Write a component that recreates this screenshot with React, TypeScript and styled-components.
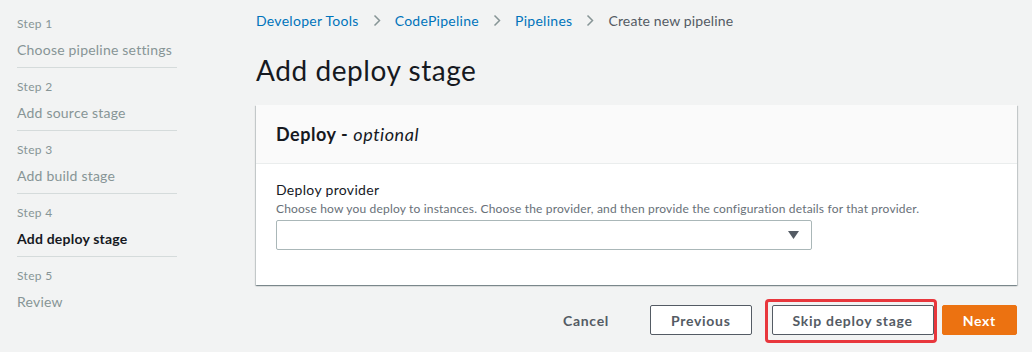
import styled, { createGlobalStyle } from "styled-components";

const GlobalStyle = createGlobalStyle`
  html, body {
    margin: 0;
    padding: 0;
    background: #f2f3f3;
  }
  body {
    font-family: Lato, "Open Sans", "Noto Sans", sans-serif;
    color: #16191f;
    letter-spacing: 0.02em;
  }
`;

const Page = styled.div`
  display: flex;
  width: 1032px;
  height: 352px;
  background: #f2f3f3;
  overflow: hidden;
`;

const Sidebar = styled.nav`
  width: 160px;
  margin-left: 17px;
  padding-top: 5px;
  flex-shrink: 0;
`;

const StepItem = styled.div<{ $last?: boolean }>`
  padding: 9px 0 5px;
  border-bottom: ${(p) => (p.$last ? "none" : "1px solid #d5dbdb")};
`;

const StepLabel = styled.div`
  font-size: 12px;
  line-height: 20px;
  color: #879596;
`;

const StepTitle = styled.div<{ $active?: boolean }>`
  margin-top: 4px;
  font-size: 14px;
  line-height: 24px;
  letter-spacing: 0.015em;
  color: ${(p) => (p.$active ? "#16191f" : "#879596")};
  font-weight: ${(p) => (p.$active ? 700 : 400)};
`;

const Main = styled.main`
  margin-left: 79px;
  width: 761px;
  padding-top: 10px;
`;

const Breadcrumbs = styled.div`
  display: flex;
  align-items: center;
  height: 20px;
  font-size: 14px;
`;

const Crumb = styled.span<{ $current?: boolean }>`
  color: ${(p) => (p.$current ? "#545b64" : "#0073bb")};
  letter-spacing: ${(p) => (p.$current ? "0.01em" : "0.02em")};
`;

const Chevron = styled.svg`
  margin: 0 14px;
  display: block;
`;

const Title = styled.h1`
  margin: 22px 0 17px;
  font-size: 28px;
  line-height: 36px;
  font-weight: 400;
  color: #16191f;
  letter-spacing: 0.02em;
`;

const Panel = styled.section`
  background: #fff;
  box-shadow: 0 1px 1px 0 rgba(0, 28, 36, 0.3), 1px 1px 1px 0 rgba(0, 28, 36, 0.15),
    -1px 1px 1px 0 rgba(0, 28, 36, 0.15);
`;

const PanelHeader = styled.header`
  background: #fafafa;
  border-bottom: 1px solid #eaeded;
  padding: 0 20px;
  height: 58px;
  display: flex;
  align-items: center;
  font-size: 18px;
  font-weight: 700;
  letter-spacing: 0.03em;
  color: #16191f;

  em {
    font-weight: 400;
    font-style: italic;
  }
`;

const PanelBody = styled.div`
  padding: 16px 20px 35px;
`;

const FieldLabel = styled.div`
  font-size: 14px;
  line-height: 20px;
  color: #16191f;
`;

const FieldHint = styled.div`
  margin-top: 1px;
  font-size: 12px;
  line-height: 16px;
  letter-spacing: 0.015em;
  color: #687078;
`;

const Select = styled.div`
  box-sizing: border-box;
  margin-top: 3px;
  width: 536px;
  height: 30px;
  border: 1px solid #aab7b8;
  border-radius: 2px;
  background: #fff;
  display: flex;
  align-items: center;
  justify-content: flex-end;
  padding-right: 12px;
`;

const Actions = styled.div`
  display: flex;
  justify-content: flex-end;
  align-items: center;
  gap: 20px;
  margin-top: 20px;
`;

const Button = styled.button<{ $variant?: "link" | "normal" | "primary" }>`
  height: 30px;
  padding: 0 20px;
  font-family: inherit;
  font-size: 14px;
  font-weight: 700;
  letter-spacing: 0.05em;
  border-radius: 2px;
  cursor: pointer;
  border: 1px solid
    ${(p) =>
      p.$variant === "primary" ? "#ec7211" : p.$variant === "link" ? "transparent" : "#545b64"};
  background: ${(p) =>
    p.$variant === "primary" ? "#ec7211" : p.$variant === "link" ? "transparent" : "#fff"};
  color: ${(p) => (p.$variant === "primary" ? "#fff" : "#545b64")};
`;

// red annotation box drawn over the skip button
const Highlight = styled.span`
  position: relative;
  display: flex;
  margin-right: -12px;

  &::after {
    content: "";
    position: absolute;
    left: -7px;
    right: -3px;
    top: -6px;
    bottom: -8px;
    border: 3px solid #e8373d;
    border-radius: 4px;
    pointer-events: none;
  }
`;

const steps = [
  { label: "Step 1", title: "Choose pipeline settings" },
  { label: "Step 2", title: "Add source stage" },
  { label: "Step 3", title: "Add build stage" },
  { label: "Step 4", title: "Add deploy stage", active: true },
  { label: "Step 5", title: "Review" },
];

const ChevronIcon = () => (
  <Chevron width="8" height="13" viewBox="0 0 8 13">
    <polyline points="1.5,1.5 6.5,6.5 1.5,11.5" fill="none" stroke="#879596" strokeWidth="1.5" />
  </Chevron>
);

export default function App() {
  return (
    <Page>
      <GlobalStyle />
      <Sidebar>
        {steps.map((s, i) => (
          <StepItem key={s.label} $last={i === steps.length - 1}>
            <StepLabel>{s.label}</StepLabel>
            <StepTitle $active={s.active}>{s.title}</StepTitle>
          </StepItem>
        ))}
      </Sidebar>
      <Main>
        <Breadcrumbs>
          <Crumb>Developer Tools</Crumb>
          <ChevronIcon />
          <Crumb>CodePipeline</Crumb>
          <ChevronIcon />
          <Crumb>Pipelines</Crumb>
          <ChevronIcon />
          <Crumb $current>Create new pipeline</Crumb>
        </Breadcrumbs>
        <Title>Add deploy stage</Title>
        <Panel>
          <PanelHeader>
            Deploy -&nbsp;<em>optional</em>
          </PanelHeader>
          <PanelBody>
            <FieldLabel>Deploy provider</FieldLabel>
            <FieldHint>
              Choose how you deploy to instances. Choose the provider, and then provide the
              configuration details for that provider.
            </FieldHint>
            <Select>
              <svg width="11" height="8" viewBox="0 0 11 8">
                <polygon points="0,0 11,0 5.5,8" fill="#545b64" />
              </svg>
            </Select>
          </PanelBody>
        </Panel>
        <Actions>
          <Button $variant="link">Cancel</Button>
          <Button>Previous</Button>
          <Highlight>
            <Button>Skip deploy stage</Button>
          </Highlight>
          <Button $variant="primary">Next</Button>
        </Actions>
      </Main>
    </Page>
  );
}
